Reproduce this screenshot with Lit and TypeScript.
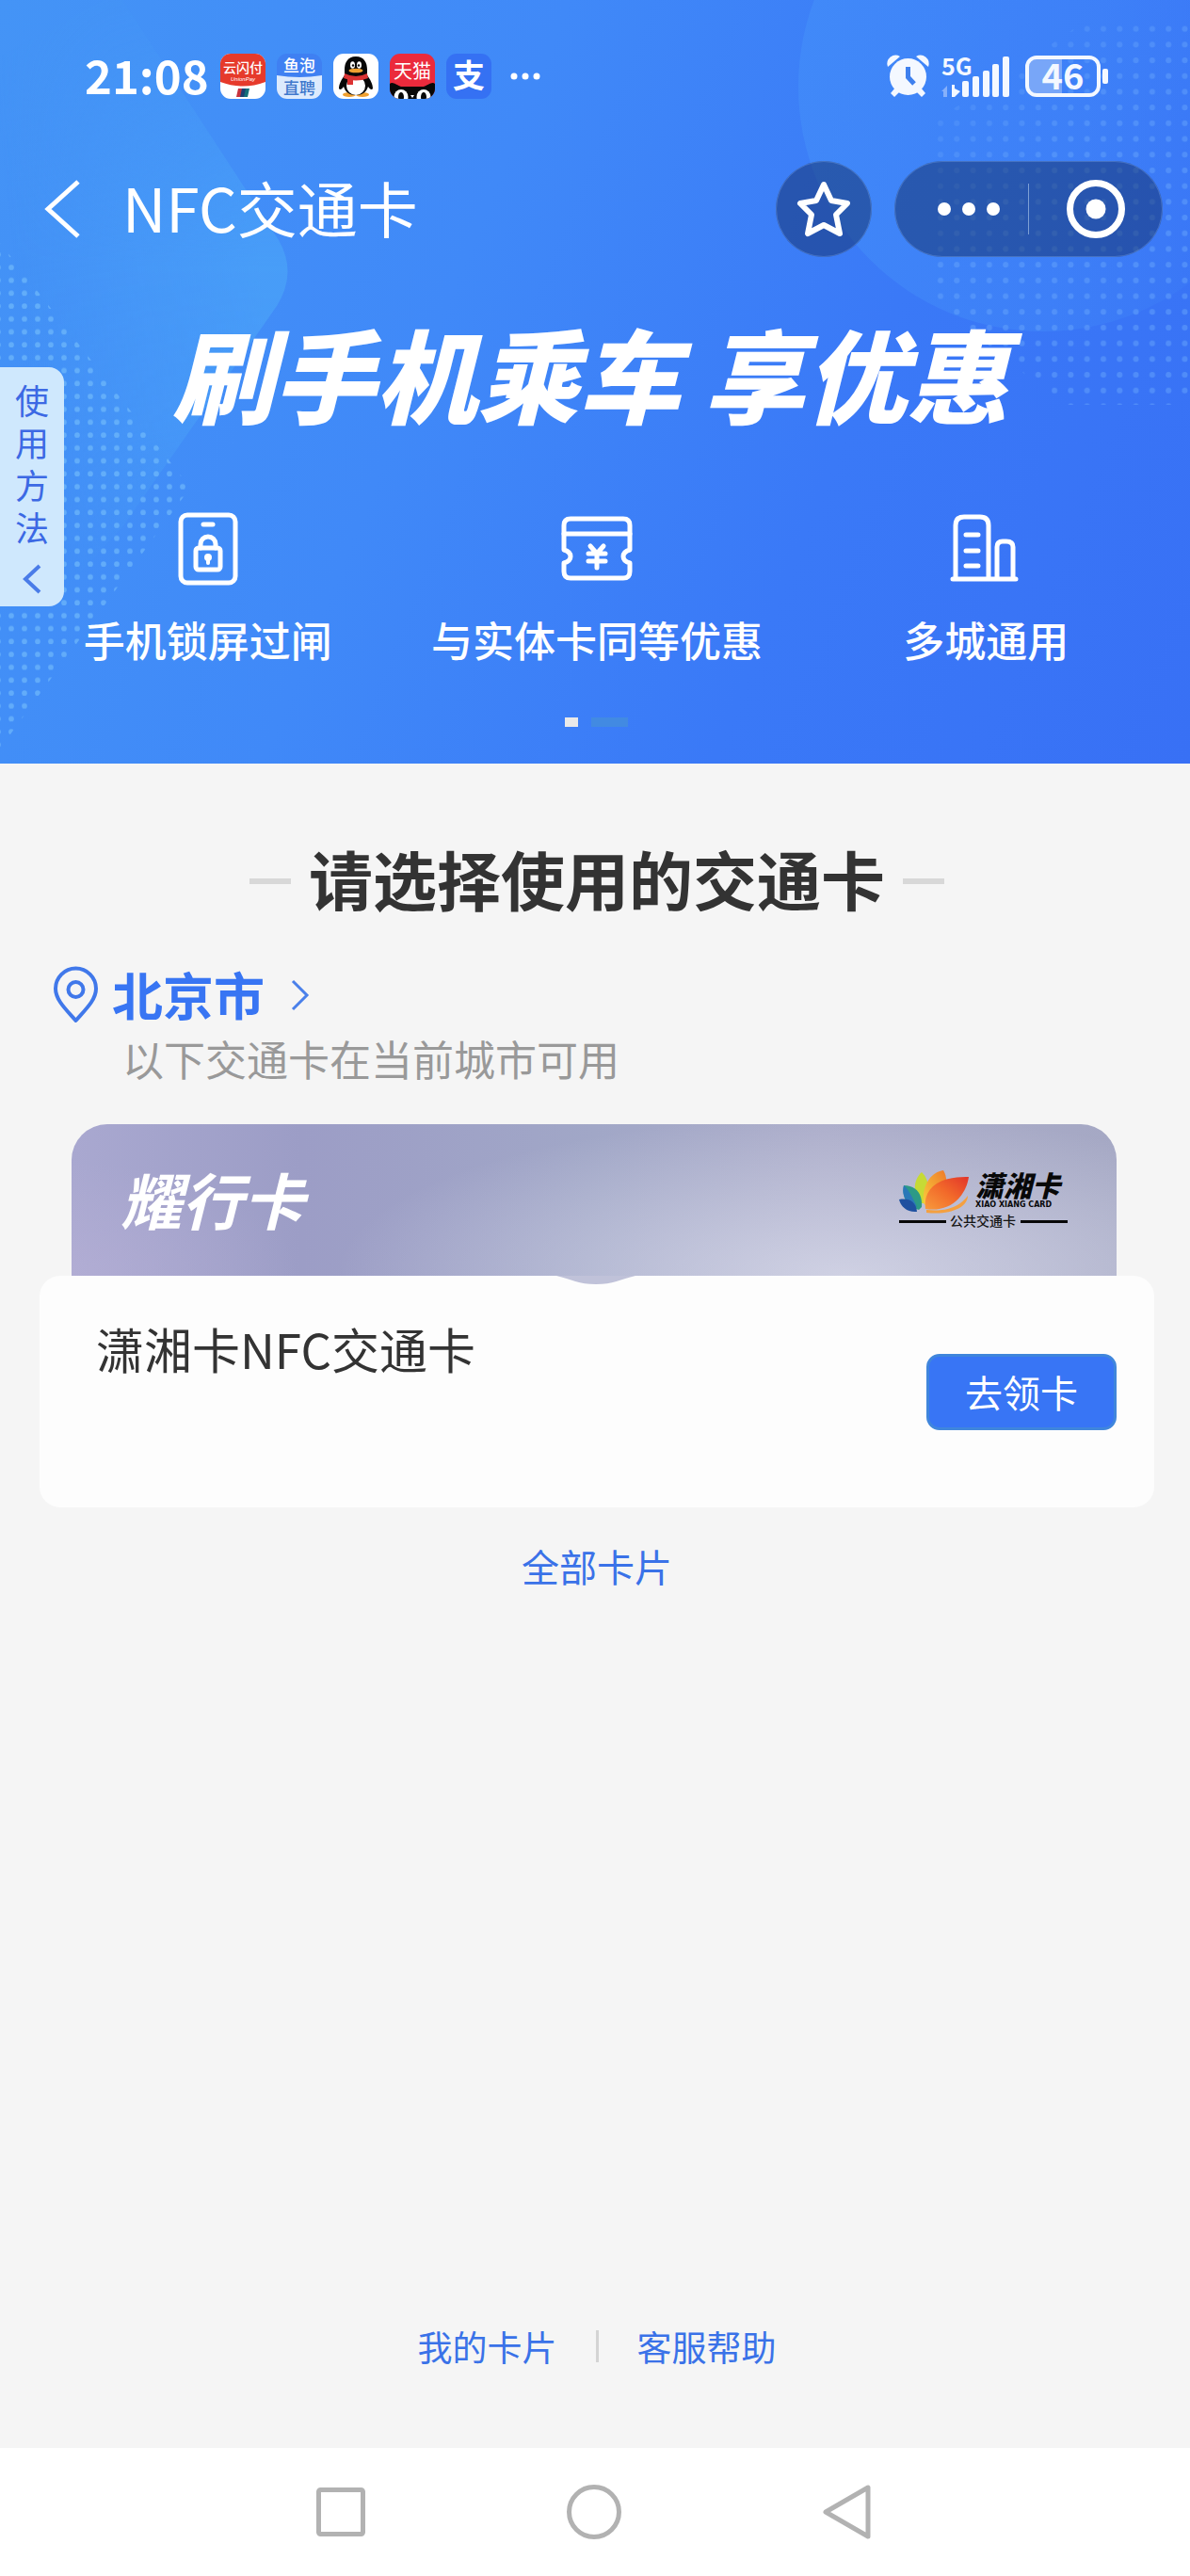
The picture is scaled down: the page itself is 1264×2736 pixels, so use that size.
import { LitElement, html, svg, css } from "lit";
import { customElement } from "lit/decorators.js";

const unionPayIcon = html`
  <svg class="app-icon" viewBox="0 0 48 48" aria-hidden="true">
    <rect width="48" height="48" rx="11" fill="#fff" />
    <path d="M0 30V11A11 11 0 0 1 11 0H37A11 11 0 0 1 48 11V30Q24 39 0 30Z" fill="#e63a2b" />
    <text class="cjk medium" x="24" y="20" font-size="14" fill="#fff" text-anchor="middle">云闪付</text>
    <text class="latin" x="24" y="29" font-size="6" fill="#fff" text-anchor="middle">UnionPay</text>
    <path d="M19 37h5l-2 9h-5z" fill="#c8323c" />
    <path d="M23 37h5l-2 9h-5z" fill="#1d3f72" />
    <path d="M27 37h4l-2 9h-4z" fill="#14707a" />
  </svg>
`;

const yupaoIcon = html`
  <svg class="app-icon" viewBox="0 0 48 48" aria-hidden="true">
    <rect width="48" height="48" rx="11" fill="#3f80f2" />
    <path d="M0 23Q24 27 48 23V37A11 11 0 0 1 37 48H11A11 11 0 0 1 0 37Z" fill="#dceafd" />
    <text class="cjk medium" x="24" y="19" font-size="17" fill="#fff" text-anchor="middle">鱼泡</text>
    <text class="cjk medium" x="24" y="43" font-size="17" fill="#3f78cc" text-anchor="middle">直聘</text>
  </svg>
`;

const penguinIcon = html`
  <svg class="app-icon" viewBox="0 0 48 48" aria-hidden="true">
    <rect width="48" height="48" rx="11" fill="#fff" />
    <ellipse cx="17" cy="43.500" rx="7" ry="2.500" fill="#f0a030" />
    <ellipse cx="31" cy="43.500" rx="7" ry="2.500" fill="#f0a030" />
    <path d="M24 3C15 3 12 10 12 17V23C9 27 6 32 6 37C7 39 9 38 11 35C13 41 17 44 24 44C31 44 35 41 37 35C39 38 41 39 42 37C42 32 39 27 36 23V17C36 10 33 3 24 3Z" fill="#080808" />
    <ellipse cx="24" cy="34" rx="10" ry="10" fill="#fff" />
    <ellipse cx="20.500" cy="12" rx="2.500" ry="3.800" fill="#fff" />
    <ellipse cx="27.500" cy="12" rx="2.500" ry="3.800" fill="#fff" />
    <circle cx="21" cy="12.500" r="1.200" fill="#080808" />
    <circle cx="27" cy="12.500" r="1.200" fill="#080808" />
    <ellipse cx="24" cy="18" rx="7.500" ry="2.300" fill="#f0a030" />
    <path d="M12 21Q24 27 36 21L37 26Q24 31 11 26Z" fill="#dc3232" />
    <path d="M15 26h6v7h-6z" fill="#dc3232" />
  </svg>
`;

const tmallIcon = html`
  <svg class="app-icon" viewBox="0 0 48 48" aria-hidden="true">
    <defs><clipPath id="tile"><rect width="48" height="48" rx="11" /></clipPath></defs>
    <g clip-path="url(#tile)">
      <rect width="48" height="48" fill="#eb2a3c" />
      <path d="M0 32C3 29 8 34 12 35H36C40 34 45 29 48 32V48H0Z" fill="#080808" />
      <ellipse cx="12" cy="46" rx="7.500" ry="8" fill="#fff" />
      <ellipse cx="36" cy="46" rx="7.500" ry="8" fill="#fff" />
      <ellipse cx="12" cy="46" rx="3" ry="5" fill="#080808" />
      <ellipse cx="36" cy="46" rx="3" ry="5" fill="#080808" />
      <path d="M22 44h4l-2 3z" fill="#fff" />
    </g>
    <text class="cjk" x="24" y="26" font-size="20" fill="#fff" text-anchor="middle">天猫</text>
  </svg>
`;

const alipayIcon = html`
  <svg class="app-icon" viewBox="0 0 48 48" aria-hidden="true">
    <rect width="48" height="48" rx="11" fill="#3571f3" />
    <text class="cjk bold" x="24" y="36" font-size="34" fill="#fff" text-anchor="middle">支</text>
  </svg>
`;

const features = [
  {
    label: "手机锁屏过闸",
    icon: svg`
      <rect x="11" y="4" width="58" height="72" rx="7" />
      <path d="M35 14h10" stroke-width="5" />
      <rect x="27" y="39" width="26" height="23" rx="3" />
      <path d="M32 39v-4a8 8 0 0 1 16 0v4" />
      <circle cx="40" cy="49" r="1.500" />
      <path d="M40 49v6" stroke-width="4" />`,
  },
  {
    label: "与实体卡同等优惠",
    icon: svg`
      <path d="M5 41V15Q5 8 12 8H68Q75 8 75 15V41Q68 43 68 48Q68 53 75 55V64Q75 71 68 71H12Q5 71 5 64V55Q12 53 12 48Q12 43 5 41Z" />
      <path d="M5 24H75" />
      <path d="M33 37L40 45L47 37M31 45H49M31 53H49M40 45V60" />`,
  },
  {
    label: "多城通用",
    icon: svg`
      <path d="M8 72V15Q8 6 17 6H34Q43 6 43 15V72M52 72V38Q52 32 58 32H62Q69 32 69 38V72M5 72H72" />
      <path d="M19 25H32M19 42H32M19 58H32" />`,
  },
];

@customElement("app-root")
export class AppRoot extends LitElement {
  static styles = css`
    :host {
      display: block;
      font-family: "Noto Sans CJK SC", "Noto Sans", sans-serif;
      color: #333;
    }
    * {
      box-sizing: border-box;
    }
    h1, h2, h3, p, ul {
      margin: 0;
      padding: 0;
    }
    svg {
      display: block;
      flex: none;
      overflow: visible;
    }
    button {
      font: inherit;
      color: inherit;
      background: none;
      border: 0;
      padding: 0;
      margin: 0;
      cursor: pointer;
    }
    a {
      color: #3a72e8;
      text-decoration: none;
    }
    .page {
      display: flex;
      flex-direction: column;
      min-height: 100vh;
      background: #f5f5f5;
    }
    .hero {
      position: relative;
      color: #fff;
      background: linear-gradient(112deg, #4494f6 0%, #4089f8 38%, #3a79f7 68%, #3870f5 100%);
      padding-bottom: 39px;
    }
    .backdrop {
      position: absolute;
      inset: 0;
      width: 100%;
      height: 100%;
      overflow: hidden;
    }
    .layer {
      position: relative;
    }
    .status {
      display: flex;
      align-items: center;
      height: 162px;
      padding: 0 86px 0 90px;
    }
    .time {
      font-size: 49px;
      line-height: 60px;
      font-weight: 700;
      margin: 0 12px 4px 0;
    }
    .apps {
      display: flex;
      gap: 12px;
      margin-right: auto;
    }
    .app-icon {
      width: 48px;
      height: 48px;
    }
    .cjk {
      font-family: "Noto Sans CJK SC", sans-serif;
    }
    .latin {
      font-family: "Liberation Sans", sans-serif;
      font-style: italic;
    }
    .medium {
      font-weight: 500;
    }
    .bold {
      font-weight: 700;
    }
    .titlebar {
      display: flex;
      align-items: center;
      height: 102px;
      margin-top: 9px;
      padding: 0 29px 0 46px;
    }
    .name {
      font-size: 64px;
      line-height: 80px;
      font-weight: 400;
      margin: 0 auto 6px 42px;
    }
    .round,
    .capsule {
      display: flex;
      align-items: center;
      height: 102px;
      border-radius: 52px;
      background: rgba(14, 36, 86, 0.45);
      outline: 1px solid rgba(130, 170, 230, 0.35);
      outline-offset: -1px;
    }
    .round {
      width: 102px;
      justify-content: center;
      margin-right: 24px;
    }
    .capsule button {
      display: flex;
      align-items: center;
      justify-content: center;
      width: 142px;
      height: 102px;
    }
    .capsule .more {
      padding-left: 16px;
    }
    .capsule .rule {
      width: 1px;
      height: 54px;
      background: #7d9fd4;
    }
    .headline {
      padding-right: 10px;
      font-size: 108px;
      line-height: 120px;
      font-weight: 900;
      font-style: italic;
      text-align: center;
      margin-top: 62px;
    }
    .features {
      display: grid;
      grid-template-columns: repeat(3, 1fr);
      list-style: none;
      margin-top: 88px;
      padding: 0 10px 0 14px;
    }
    .feature {
      display: flex;
      flex-direction: column;
      align-items: center;
      gap: 26px;
      font-size: 44px;
      line-height: 60px;
      font-weight: 500;
    }
    .pager {
      display: flex;
      justify-content: center;
      gap: 14px;
      margin-top: 53px;
      padding-left: 2px;
    }
    .page-dot {
      width: 14px;
      height: 10px;
      background: #e9e9e9;
    }
    .page-dash {
      width: 39px;
      height: 10px;
      background: #428ae2;
    }
    .howto {
      position: absolute;
      left: 0;
      top: 390px;
      width: 68px;
      display: flex;
      flex-direction: column;
      align-items: center;
      padding: 12px 0 14px;
      border-radius: 0 16px 16px 0;
      background: #cfe8fd;
      color: #3c69e4;
      font-size: 36px;
      line-height: 45px;
    }
    .howto-text {
      width: 36px;
      margin-bottom: 18px;
    }
    .content {
      flex: 1;
      display: flex;
      flex-direction: column;
      padding: 82px 38px 0 42px;
    }
    .section-title {
      display: flex;
      justify-content: center;
      align-items: center;
      gap: 19px;
      font-size: 68px;
      line-height: 80px;
      font-weight: 700;
    }
    .section-title::before,
    .section-title::after {
      content: "";
      width: 44px;
      height: 6px;
      margin-top: 6px;
      background: #d8d8d8;
    }
    .city {
      display: flex;
      align-items: center;
      align-self: flex-start;
      margin: 47px 0 0 13px;
      color: #3875f3;
      font-size: 54px;
      line-height: 72px;
      font-weight: 700;
    }
    .city-name {
      margin: 0 26px 2px 13px;
    }
    .hint {
      margin: 0 0 0 88px;
      font-size: 44px;
      line-height: 60px;
      color: #999;
    }
    .card {
      margin-top: 40px;
    }
    .banner {
      position: relative;
      display: flex;
      align-items: center;
      justify-content: space-between;
      height: 161px;
      margin: 0 40px 0 34px;
      padding: 0 52px;
      border-radius: 38px 38px 0 0;
      color: #fff;
      background:
        radial-gradient(ellipse 540px 170px at 74% 100%, rgba(222, 224, 238, 0.7), rgba(222, 224, 238, 0)),
        radial-gradient(ellipse 240px 120px at 0% 100%, rgba(186, 178, 216, 0.5), rgba(186, 178, 216, 0)),
        linear-gradient(90deg, #a9a8d0 0%, #9c9dc6 22%, #a1a7c7 50%, #acadca 72%, #a5a8c4 100%);
    }
    .banner-name {
      font-size: 65px;
      line-height: 90px;
      font-weight: 700;
      font-style: italic;
      margin-bottom: 4px;
    }
    .notch {
      position: absolute;
      top: 100%;
      left: 50%;
      margin-left: -40px;
    }
    .wide {
      font-family: "DejaVu Sans", sans-serif;
      font-weight: 700;
    }
    .black {
      font-weight: 900;
      font-style: italic;
    }
    .card-body {
      display: flex;
      align-items: center;
      justify-content: space-between;
      height: 246px;
      padding: 0 40px 0 60px;
      border-radius: 22px;
      background: #fdfdfd;
    }
    .card-name {
      align-self: flex-start;
      margin-top: 43px;
      font-size: 51px;
      line-height: 68px;
      font-weight: 400;
    }
    .get {
      padding: 0 38px;
      border: 3px solid #4086dc;
      border-radius: 14px;
      background: #3875f5;
      color: #fff;
      font-size: 40px;
      line-height: 75px;
    }
    .all {
      align-self: center;
      margin-top: 34px;
      font-size: 40px;
      line-height: 56px;
    }
    .links {
      display: flex;
      justify-content: center;
      align-items: center;
      gap: 41px;
      margin-bottom: 80px;
      padding-left: 4px;
      font-size: 37px;
      line-height: 56px;
    }
    .links .rule {
      width: 3px;
      height: 34px;
      background: #d4d4d4;
    }
    .nav {
      display: flex;
      justify-content: center;
      align-items: center;
      gap: 205px;
      height: 136px;
      padding-right: 2px;
      background: #fff;
    }
  `;

  render() {
    return html`
      <div class="page">
        <header class="hero">
          ${this.backdrop()}
          <div class="layer">
            ${this.statusBar()} ${this.titleBar()}
            <h2 class="headline">刷手机乘车 享优惠</h2>
            <ul class="features">
              ${features.map(
                (f) => html`<li class="feature">
                  <svg width="80" height="80" viewBox="0 0 80 80" fill="none" stroke="#fff" stroke-width="5" stroke-linecap="round" stroke-linejoin="round" aria-hidden="true">${f.icon}</svg>
                  <span>${f.label}</span>
                </li>`
              )}
            </ul>
            <div class="pager"><span class="page-dot"></span><span class="page-dash"></span></div>
          </div>
          <button class="howto">
            <span class="howto-text">使用方法</span>
            <svg width="24" height="30" viewBox="0 0 24 30" aria-hidden="true">
              <path d="M20 1L5 15L20 29" fill="none" stroke="#4a7ce8" stroke-width="4" />
            </svg>
          </button>
        </header>

        <main class="content">
          <h2 class="section-title">请选择使用的交通卡</h2>
          <button class="city">
            <svg width="51" height="62" viewBox="0 0 51 62" fill="none" stroke="#4078ea" stroke-width="4" aria-hidden="true">
              <path d="M25.500 58C15 46 4 36 4 24A21.500 21.500 0 0 1 47 24C47 36 36 46 25.500 58Z" stroke-linejoin="round" />
              <circle cx="25.500" cy="25" r="8" />
            </svg>
            <span class="city-name">北京市</span>
            <svg width="22" height="34" viewBox="0 0 22 34" aria-hidden="true">
              <path d="M4 2L19 17L4 32" fill="none" stroke="#4a80ea" stroke-width="3" />
            </svg>
          </button>
          <p class="hint">以下交通卡在当前城市可用</p>

          <section class="card">
            <div class="banner">
              <h3 class="banner-name">耀行卡</h3>
              ${this.issuerLogo()}
              <svg class="notch" width="84" height="10" viewBox="0 0 84 10" aria-hidden="true">
                <path d="M0 0C16 4 24 9 42 9S68 4 84 0Z" fill="#c0c2d9" />
              </svg>
            </div>
            <div class="card-body">
              <h3 class="card-name">潇湘卡NFC交通卡</h3>
              <button class="get">去领卡</button>
            </div>
          </section>
          <a class="all" href="#all">全部卡片</a>
        </main>

        <footer class="links">
          <a href="#mine">我的卡片</a>
          <span class="rule"></span>
          <a href="#help">客服帮助</a>
        </footer>

        <nav class="nav">
          <button aria-label="最近任务">
            <svg width="64" height="64" viewBox="0 0 64 64" fill="none" stroke="#b2b2b2" stroke-width="5"><rect x="8.500" y="8.500" width="47" height="47" rx="2" /></svg>
          </button>
          <button aria-label="主屏幕">
            <svg width="64" height="64" viewBox="0 0 64 64" fill="none" stroke="#b2b2b2" stroke-width="5"><circle cx="32" cy="32" r="26.500" /></svg>
          </button>
          <button aria-label="返回上一级">
            <svg width="64" height="64" viewBox="0 0 64 64" fill="none" stroke="#b2b2b2" stroke-width="5" stroke-linejoin="round"><path d="M9 32L54 6V58Z" /></svg>
          </button>
        </nav>
      </div>
    `;
  }

  private backdrop() {
    return html`
      <svg class="backdrop" viewBox="0 0 1264 811" preserveAspectRatio="none" aria-hidden="true">
        <defs>
          <pattern id="dots-left" x="5" y="3" width="14" height="13.700" patternUnits="userSpaceOnUse">
            <circle cx="7" cy="7" r="2.800" fill="#7cc4fc" />
          </pattern>
          <pattern id="dots-right" x="991" y="6" width="17.300" height="16.700" patternUnits="userSpaceOnUse">
            <circle cx="8" cy="8" r="3" fill="#6aa8fc" />
          </pattern>
          <linearGradient id="blob" x1="0.900" y1="0.400" x2="0.100" y2="0.600">
            <stop offset="0" stop-color="#4aa2f8" stop-opacity="0.750" />
            <stop offset="0.500" stop-color="#4aa0f8" stop-opacity="0.500" />
            <stop offset="1" stop-color="#4aa0f8" stop-opacity="0" />
          </linearGradient>
          <linearGradient id="blob-fade" x1="0" y1="0" x2="0" y2="1">
            <stop offset="0" stop-color="#fff" stop-opacity="0.150" />
            <stop offset="0.400" stop-color="#fff" stop-opacity="1" />
            <stop offset="0.650" stop-color="#fff" stop-opacity="0.900" />
            <stop offset="1" stop-color="#fff" stop-opacity="0.100" />
          </linearGradient>
          <mask id="blob-mask"><rect x="0" y="0" width="330" height="700" fill="url(#blob-fade)" /></mask>
          <linearGradient id="ring" x1="0" y1="0.400" x2="1" y2="0.600">
            <stop offset="0" stop-color="#4694fa" stop-opacity="0.450" />
            <stop offset="0.600" stop-color="#4694fa" stop-opacity="0.300" />
            <stop offset="1" stop-color="#4694fa" stop-opacity="0" />
          </linearGradient>
          <linearGradient id="fade" x1="0" y1="0" x2="0.600" y2="1">
            <stop offset="0" stop-color="#fff" stop-opacity="0.100" />
            <stop offset="0.500" stop-color="#fff" stop-opacity="0.550" />
            <stop offset="1" stop-color="#fff" stop-opacity="0.600" />
          </linearGradient>
          <mask id="fade-mask"><rect x="980" y="0" width="284" height="450" fill="url(#fade)" /></mask>
        </defs>
        <g mask="url(#blob-mask)">
          <path d="M0 60L110 0H130L296 255Q316 290 294 325L130 560L0 700Z" fill="url(#blob)" />
        </g>
        <circle cx="1108" cy="92" r="260" fill="url(#ring)" />
        <path d="M0 258L202 518L0 795Z" fill="url(#dots-left)" opacity="0.550" />
        <g mask="url(#fade-mask)">
          <path d="M1264 18H1160L991 130V320L1130 430H1245L1264 415Z" fill="url(#dots-right)" opacity="0.800" />
        </g>
      </svg>
    `;
  }

  private statusBar() {
    const bars = [
      [0, 26],
      [11, 21],
      [22, 15],
      [32, 8],
      [43, 0],
    ];
    return html`
      <div class="status">
        <span class="time">21:08</span>
        <div class="apps">
          ${unionPayIcon} ${yupaoIcon} ${penguinIcon} ${tmallIcon} ${alipayIcon}
          <svg width="56" height="48" viewBox="0 0 56 48" fill="#fff" aria-hidden="true">
            <circle cx="12" cy="24" r="3.500" />
            <circle cx="24" cy="24" r="3.500" />
            <circle cx="36" cy="24" r="3.500" />
          </svg>
        </div>
        <svg width="236" height="48" viewBox="0 0 236 48" aria-hidden="true">
          <g fill="#f4f8ff">
            <path d="M1 14A9 9 0 0 1 14 3Z" />
            <path d="M44 14A9 9 0 0 0 31 3Z" />
            <circle cx="22.500" cy="24.500" r="19.500" />
            <path d="M9 36L14 40L8 46L4 42ZM36 36L31 40L37 46L41 42Z" />
          </g>
          <path d="M22.500 14V25L29 32" fill="none" stroke="#3f80ee" stroke-width="5" />
          <text class="cjk bold" x="58" y="23" font-size="25" fill="#f4f8ff">5G</text>
          <path d="M60 46V40H58L64 34V46Z" fill="#86b0fa" />
          <path d="M69 33H72V37L78 40L72 46H69Z" fill="#f4f8ff" />
          ${bars.map(
            ([x, y]) => svg`<rect x=${80 + x} y=${3 + y} width="7" height=${43 - y} rx="2" fill="#f4f8ff" />`
          )}
          <path d="M158 6H186V42H158Q151 42 151 35V13Q151 6 158 6Z" fill="#78a6f8" />
          <rect x="149" y="4" width="76" height="40" rx="10" fill="none" stroke="#f4f8ff" stroke-width="4" />
          <rect x="229" y="16" width="6" height="16" rx="2" fill="#f4f8ff" />
          <text class="cjk bold" x="187" y="38" font-size="38" fill="#f4f8ff" text-anchor="middle">46</text>
        </svg>
      </div>
    `;
  }

  private titleBar() {
    return html`
      <div class="titlebar">
        <button aria-label="返回">
          <svg width="42" height="64" viewBox="0 0 42 64" aria-hidden="true">
            <path d="M37 3L5 32L37 61" fill="none" stroke="#fff" stroke-width="5" />
          </svg>
        </button>
        <h1 class="name">NFC交通卡</h1>
        <button class="round" aria-label="收藏">
          <svg width="60" height="64" viewBox="0 0 60 64" aria-hidden="true">
            <path d="M30 6L38 23L55 26L43 38L47 58L30 49L13 58L17 38L5 26L22 23Z" fill="none" stroke="#fff" stroke-width="6" stroke-linejoin="round" />
          </svg>
        </button>
        <div class="capsule">
          <button class="more" aria-label="更多">
            <svg width="70" height="20" viewBox="0 0 70 20" fill="#fff" aria-hidden="true">
              <circle cx="9" cy="10" r="7" />
              <circle cx="35" cy="10" r="7" />
              <circle cx="61" cy="10" r="7" />
            </svg>
          </button>
          <span class="rule"></span>
          <button aria-label="关闭">
            <svg width="64" height="64" viewBox="0 0 64 64" aria-hidden="true">
              <circle cx="32" cy="32" r="27.500" fill="none" stroke="#fff" stroke-width="7" />
              <circle cx="32" cy="32" r="10.500" fill="#fff" />
            </svg>
          </button>
        </div>
      </div>
    `;
  }

  private issuerLogo() {
    return html`
      <svg width="180" height="66" viewBox="0 0 180 66" role="img" aria-label="潇湘卡 公共交通卡">
        <defs>
          <linearGradient id="petal-red" x1="0" y1="1" x2="1" y2="0">
            <stop offset="0" stop-color="#f79a3c" />
            <stop offset="0.500" stop-color="#f26a2a" />
            <stop offset="1" stop-color="#e2342a" />
          </linearGradient>
          <linearGradient id="petal-orange" x1="0" y1="1" x2="1" y2="0">
            <stop offset="0" stop-color="#f9cf3c" />
            <stop offset="1" stop-color="#ee7a2a" />
          </linearGradient>
        </defs>
        <path d="M22 36C15 23 17 10 25 3C33 10 35 26 28 36Z" fill="#c6da36" />
        <path d="M22 43C9 40 4 30 6 17C19 17 26 26 25 40Z" fill="#2c9a86" />
        <path d="M6 17C3 27 8 36 20 40C16 32 12 22 6 17Z" fill="#2a78b8" />
        <path d="M20 45C10 46 3 40 1 32C11 30 19 34 20 45Z" fill="#1e50a0" />
        <path d="M27 36C25 18 34 3 48 1C56 14 48 32 31 40Z" fill="url(#petal-orange)" />
        <path d="M29 42C26 20 44 7 75 8C72 28 56 46 29 42Z" fill="url(#petal-red)" />
        <path d="M30 43C50 45 64 41 74 28C74 40 56 49 30 46Z" fill="#f4a040" />
        <text class="cjk black" x="82" y="29" font-size="30" fill="#080808">潇湘卡</text>
        <text class="wide" x="82" y="40" font-size="8" fill="#080808">XIAO XIANG CARD</text>
        <rect x="1" y="54" width="50" height="3" fill="#080808" />
        <rect x="130" y="54" width="50" height="3" fill="#080808" />
        <text class="cjk medium" x="90" y="60" font-size="14" fill="#141414" text-anchor="middle">公共交通卡</text>
      </svg>
    `;
  }
}
